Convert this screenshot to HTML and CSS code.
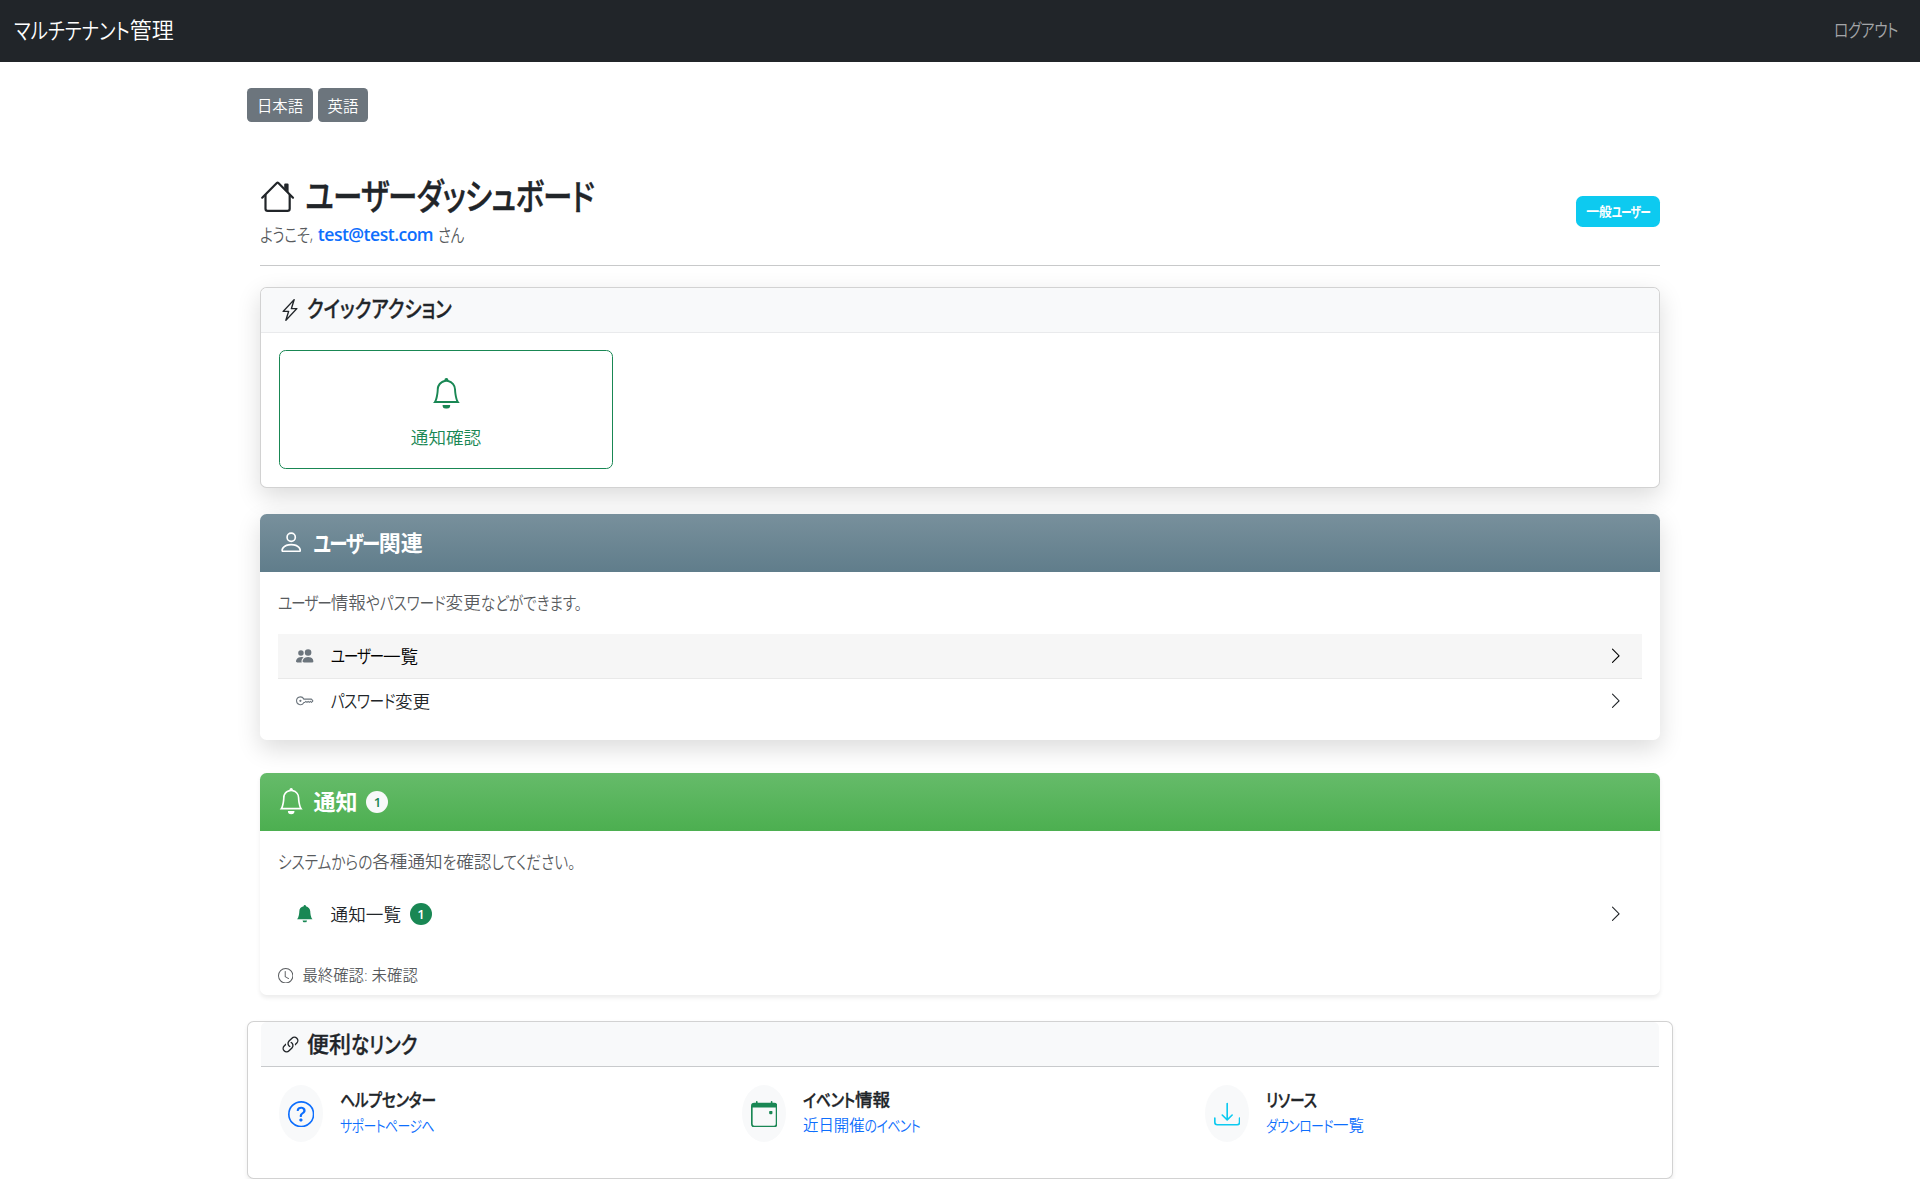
FILE: index.html
```html
<!DOCTYPE html>
<html lang="ja">
<head>
<meta charset="utf-8">
<title>ユーザーダッシュボード</title>
<link rel="stylesheet" href="styles.css">
</head>
<body>
<svg class="sprite" aria-hidden="true">
  <symbol id="house" viewBox="0 0 16 16"><path fill-rule="evenodd" d="M2 13.5V7h1v6.5a.5.5 0 0 0 .5.5h9a.5.5 0 0 0 .5-.5V7h1v6.5a1.5 1.5 0 0 1-1.5 1.5h-9A1.5 1.5 0 0 1 2 13.5zm11-11V6l-2-2V2.500a.5.5 0 0 1 .5-.5h1a.5.5 0 0 1 .5.5z"/><path fill-rule="evenodd" d="M7.293 1.500a1 1 0 0 1 1.414 0l6.647 6.646a.5.5 0 0 1-.708.708L8 2.207 1.354 8.854a.5.5 0 1 1-.708-.708z"/></symbol>
  <symbol id="lightning" viewBox="0 0 16 16"><path d="M11.251.068a.5.5 0 0 1 .227.580L9.677 6.500H13a.5.5 0 0 1 .364.843l-8 8.500a.5.5 0 0 1-.842-.490L6.323 9.500H3a.5.5 0 0 1-.364-.843l8-8.500a.5.5 0 0 1 .615-.090zM4.157 8.500H7a.5.5 0 0 1 .478.647L6.110 13.590l5.732-6.090H9a.5.5 0 0 1-.478-.647L9.890 2.410z"/></symbol>
  <symbol id="bell" viewBox="0 0 16 16"><path d="M8 16a2 2 0 0 0 2-2H6a2 2 0 0 0 2 2M8 1.918l-.797.161A4 4 0 0 0 4 6c0 .628-.134 2.197-.459 3.742-.16.767-.376 1.566-.663 2.258h10.244c-.287-.692-.502-1.490-.663-2.258C12.134 8.197 12 6.628 12 6a4 4 0 0 0-3.203-3.920zM14.220 12c.223.447.481.801.780 1H1c.299-.199.557-.553.780-1C2.680 10.200 3 6.880 3 6c0-2.420 1.720-4.440 4.005-4.901a1 1 0 1 1 1.990 0A5 5 0 0 1 13 6c0 .880.320 4.200 1.220 6"/></symbol>
  <symbol id="bell-fill" viewBox="0 0 16 16"><path d="M8 16a2 2 0 0 0 2-2H6a2 2 0 0 0 2 2m.995-14.901a1 1 0 1 0-1.990 0A5 5 0 0 0 3 6c0 1.098-.500 6-2 7h14c-1.500-1-2-5.902-2-7 0-2.420-1.720-4.440-4.005-4.901"/></symbol>
  <symbol id="person" viewBox="0 0 16 16"><path d="M8 8a3 3 0 1 0 0-6 3 3 0 0 0 0 6m2-3a2 2 0 1 1-4 0 2 2 0 0 1 4 0m4 8c0 1-1 1-1 1H3s-1 0-1-1 1-4 6-4 6 3 6 4m-1-.004c-.001-.246-.154-.986-.832-1.664C11.516 10.680 10.289 10 8 10s-3.516.680-4.168 1.332c-.678.678-.830 1.418-.832 1.664z"/></symbol>
  <symbol id="people" viewBox="0 0 16 16"><path d="M7 14s-1 0-1-1 1-4 5-4 5 3 5 4-1 1-1 1zm4-6a3 3 0 1 0 0-6 3 3 0 0 0 0 6m-5.784 6A2.240 2.240 0 0 1 5 13c0-1.355.680-2.750 1.936-3.720A6.300 6.300 0 0 0 5 9c-4 0-5 3-5 4s1 1 1 1zM4.500 8a2.500 2.500 0 1 0 0-5 2.500 2.500 0 0 0 0 5"/></symbol>
  <symbol id="key" viewBox="0 0 16 16"><path d="M0 8a4 4 0 0 1 7.465-2H14a.5.5 0 0 1 .354.146l1.500 1.500a.5.5 0 0 1 0 .708l-1.500 1.500a.5.5 0 0 1-.708 0L13 9.207l-.646.647a.5.5 0 0 1-.708 0L11 9.207l-.646.647a.5.5 0 0 1-.708 0L9 9.207l-.646.647A.5.5 0 0 1 8 10h-.535A4 4 0 0 1 0 8m4-3a3 3 0 1 0 2.712 4.285A.5.5 0 0 1 7.163 9h.630l.853-.854a.5.5 0 0 1 .708 0l.646.647.646-.647a.5.5 0 0 1 .708 0l.646.647.646-.647a.5.5 0 0 1 .708 0l.646.647.793-.793-1-1h-6.630a.5.5 0 0 1-.451-.285A3 3 0 0 0 4 5"/><circle cx="4" cy="8" r="1"/></symbol>
  <symbol id="chevron" viewBox="0 0 16 16"><path fill-rule="evenodd" d="M4.646 1.646a.5.5 0 0 1 .708 0l6 6a.5.5 0 0 1 0 .708l-6 6a.5.5 0 0 1-.708-.708L10.293 8 4.646 2.354a.5.5 0 0 1 0-.708"/></symbol>
  <symbol id="clock" viewBox="0 0 16 16"><path d="M8 3.500a.5.5 0 0 0-1 0V9a.5.5 0 0 0 .252.434l3.500 2a.5.5 0 0 0 .496-.868L8 8.710z"/><path d="M8 16A8 8 0 1 0 8 0a8 8 0 0 0 0 16m7-8A7 7 0 1 1 1 8a7 7 0 0 1 14 0"/></symbol>
  <symbol id="link" viewBox="0 0 16 16"><path d="M6.354 5.500H4a3 3 0 0 0 0 6h3a3 3 0 0 0 2.830-4H9q-.130 0-.250.031A2 2 0 0 1 7 10.500H4a2 2 0 1 1 0-4h1.535c.218-.376.495-.714.820-1z" transform="rotate(-45 8 8)"/><path d="M9 5.500a3 3 0 0 0-2.830 4h1.098A2 2 0 0 1 9 6.500h3a2 2 0 1 1 0 4h-1.535a4 4 0 0 1-.820 1H12a3 3 0 1 0 0-6z" transform="rotate(-45 8 8)"/></symbol>
  <symbol id="question" viewBox="0 0 16 16"><path d="M8 15A7 7 0 1 1 8 1a7 7 0 0 1 0 14m0 1A8 8 0 1 0 8 0a8 8 0 0 0 0 16"/><path d="M5.255 5.786a.237.237 0 0 0 .241.247h.825c.138 0 .248-.113.266-.250.090-.656.540-1.134 1.342-1.134.686 0 1.314.343 1.314 1.168 0 .635-.374.927-.965 1.371-.673.489-1.206 1.060-1.168 1.987l.003.217a.250.250 0 0 0 .250.246h.811a.250.250 0 0 0 .250-.250v-.105c0-.718.273-.927 1.010-1.486.609-.463 1.244-.977 1.244-2.056 0-1.511-1.276-2.241-2.673-2.241-1.267 0-2.655.590-2.750 2.286m1.557 5.763c0 .533.425.927 1.010.927.609 0 1.028-.394 1.028-.927 0-.552-.420-.940-1.029-.940-.584 0-1.009.388-1.009.940"/></symbol>
  <symbol id="calendar" viewBox="0 0 16 16"><path d="M11 6.500a.5.5 0 0 1 .5-.5h1a.5.5 0 0 1 .5.5v1a.5.5 0 0 1-.5.5h-1a.5.5 0 0 1-.5-.5z"/><path d="M3.500 0a.5.5 0 0 1 .5.5V1h8V.5a.5.5 0 0 1 1 0V1h1a2 2 0 0 1 2 2v11a2 2 0 0 1-2 2H2a2 2 0 0 1-2-2V3a2 2 0 0 1 2-2h1V.5a.5.5 0 0 1 .5-.5M1 4v10a1 1 0 0 0 1 1h12a1 1 0 0 0 1-1V4z"/></symbol>
  <symbol id="download" viewBox="0 0 16 16"><path d="M.5 9.900a.5.5 0 0 1 .5.5v2.500a1 1 0 0 0 1 1h12a1 1 0 0 0 1-1v-2.500a.5.5 0 0 1 1 0v2.500a2 2 0 0 1-2 2H2a2 2 0 0 1-2-2v-2.500a.5.5 0 0 1 .5-.5"/><path d="M7.646 11.854a.5.5 0 0 0 .708 0l3-3a.5.5 0 0 0-.708-.708L8.500 10.293V1.500a.5.5 0 0 0-1 0v8.793L5.354 8.146a.5.5 0 1 0-.708.708z"/></symbol>
</svg>

<nav class="navbar">
  <a class="brand"><span class="kana">マルチテナント</span>管理</a>
  <a class="logout"><span class="kana">ログアウト</span></a>
</nav>

<main class="container">
  <div class="languages">
    <button class="lang">日本語</button>
    <button class="lang">英語</button>
  </div>

  <div class="dashboard">
    <header class="page-head">
      <div>
        <h1 class="title"><svg class="icon"><use href="#house"/></svg><span class="kana">ユーザーダッシュボード</span></h1>
        <p class="welcome"><span class="kana">ようこそ</span>, <strong class="email">test@test.com</strong> <span class="kana">さん</span></p>
      </div>
      <span class="role"><span>一般</span><span class="kana tight">ユーザー</span></span>
    </header>

    <section class="card quick">
      <h2 class="card-head"><svg class="icon"><use href="#lightning"/></svg><span class="kana">クイックアクション</span></h2>
      <div class="quick-body">
        <a class="quick-button"><svg class="icon"><use href="#bell"/></svg><span>通知確認</span></a>
      </div>
    </section>

    <section class="card panel users">
      <h2 class="panel-head slate"><svg class="icon"><use href="#person"/></svg><span><span class="kana tight">ユーザー</span>関連</span></h2>
      <div class="panel-body">
        <p class="description"><span class="kana tight">ユーザー</span>情報<span class="kana">やパスワード</span>変更<span class="kana">などができます。</span></p>
        <a class="row active"><svg class="icon gray"><use href="#people"/></svg><span class="label"><span class="kana tight">ユーザー</span>一覧</span><svg class="icon"><use href="#chevron"/></svg></a>
        <a class="row"><svg class="icon gray"><use href="#key"/></svg><span class="label"><span class="kana">パスワード</span>変更</span><svg class="icon"><use href="#chevron"/></svg></a>
      </div>
    </section>

    <section class="card panel notices">
      <h2 class="panel-head green"><svg class="icon"><use href="#bell"/></svg><span>通知</span><span class="count light">1</span></h2>
      <div class="panel-body">
        <p class="description"><span class="kana">システムからの</span>各種通知<span class="kana">を</span>確認<span class="kana">してください。</span></p>
        <a class="row"><svg class="icon success"><use href="#bell-fill"/></svg><span class="label">通知一覧<span class="count">1</span></span><svg class="icon"><use href="#chevron"/></svg></a>
        <p class="checked"><svg class="icon"><use href="#clock"/></svg><span>最終確認: 未確認</span></p>
      </div>
    </section>
  </div>

  <section class="card links">
    <h2 class="card-head"><svg class="icon"><use href="#link"/></svg><span>便利<span class="kana">なリンク</span></span></h2>
    <div class="link-grid">
      <div class="link-item"><span class="bubble blue"><svg class="icon"><use href="#question"/></svg></span><div><h3><span class="kana">ヘルプセンター</span></h3><a><span class="kana">サポートページへ</span></a></div></div>
      <div class="link-item"><span class="bubble success"><svg class="icon"><use href="#calendar"/></svg></span><div><h3><span class="kana">イベント</span>情報</h3><a>近日開催<span class="kana">のイベント</span></a></div></div>
      <div class="link-item"><span class="bubble cyan"><svg class="icon"><use href="#download"/></svg></span><div><h3><span class="kana">リソース</span></h3><a><span class="kana">ダウンロード</span>一覧</a></div></div>
    </div>
  </section>
</main>
</body>
</html>
```
FILE: styles.css
```css
* { box-sizing: border-box; }
html { font-size: 17.6px; }
body {
  margin: 0;
  background: #fff;
  color: #212529;
  font-family: "Open Sans", "Noto Sans CJK JP", sans-serif;
  line-height: 1.5;
}
h1, h2, h3, p { margin: 0; font-weight: 500; }
p { font-weight: 350; }
a { text-decoration: none; font-weight: 350; }
.sprite { position: absolute; width: 0; height: 0; }
.icon { width: 1em; height: 1em; fill: currentColor; flex: none; display: block; }

/* Condensed kana: a smaller size stretched back to full height */
.kana {
  display: inline-block;
  font-size: .84em;
  line-height: 1;
  font-feature-settings: "palt";
  letter-spacing: -0.03em;
  transform: scaleY(1.22);
}
.kana.tight { letter-spacing: -0.085em; }

.navbar {
  height: 62px;
  padding: 0 22px 3px 14px;
  display: flex;
  align-items: center;
  justify-content: space-between;
  background: #212529;
  color: #fff;
}
.brand { font-size: 22px; line-height: 33px; }
.brand .kana { letter-spacing: 0; }
.logout { color: rgba(255, 255, 255, .6); }

.container { width: 1426px; margin: 0 auto; padding-top: 26px; }
.languages { display: flex; gap: 5px; }
.lang {
  height: 34px;
  width: 66px;
  padding: 0;
  border: 0;
  border-radius: 4.4px;
  background: #6c757d;
  color: #fff;
  font: 350 15.4px/33px "Noto Sans CJK JP", sans-serif;
}
.lang + .lang { width: 50px; }

.dashboard { padding: 0 13px; }
.page-head {
  height: 144px;
  padding: 48px 0 12px;
  border-bottom: 1px solid #c8c9ca;
  display: flex;
  align-items: center;
  justify-content: space-between;
}
.title { margin-top: 3px; display: flex; align-items: center; gap: 10px; font-size: 35.2px; line-height: 42px; }
.title, .card-head, .link-item h3 { -webkit-text-stroke: .3px currentColor; }
.welcome { margin-top: 7px; line-height: 26px; color: rgba(33, 37, 41, .75); }
.email { color: #0d6efd; font-weight: 600; letter-spacing: -0.03em; }
.role {
  width: 84px;
  height: 31px;
  border-radius: 6.6px;
  background: #0dcaf0;
  color: #fff;
  font-size: 12.8px;
  line-height: 31px;
  font-weight: 700;
  text-align: center;
}

.card { border: 1px solid rgba(0, 0, 0, .176); border-radius: 6.6px; background: #fff; }
.card-head {
  height: 45px;
  padding: 0 18px 1px;
  border-bottom: 1px solid #e9eaec;
  border-radius: 5.6px 5.6px 0 0;
  background: #f8f9fa;
  display: flex;
  align-items: center;
  gap: 6px;
  font-size: 22px;
}
.card-head .kana { letter-spacing: 0; }
.quick { height: 201px; margin-top: 21px; box-shadow: 0 8.8px 25px rgba(0, 0, 0, .14); }
.quick .kana { letter-spacing: .005em; }
.quick-body { padding: 17px 18px; }
.quick-button {
  width: 334px;
  height: 119px;
  border: 1px solid #198754;
  border-radius: 6.6px;
  color: #198754;
  display: flex;
  flex-direction: column;
  align-items: center;
  padding-top: 27px;
  gap: 15px;
}
.quick-button .icon { font-size: 30.8px; }

.panel { border: 0; }
.users { height: 226px; margin-top: 26px; box-shadow: 0 8.8px 25px rgba(0, 0, 0, .14); }
.notices { height: 222px; margin-top: 33px; box-shadow: 0 2.2px 4.4px rgba(0, 0, 0, .075); }
.panel-head {
  height: 58px;
  padding: 0 18px 1px;
  border-radius: 6.6px 6.6px 0 0;
  color: #fff;
  display: flex;
  align-items: center;
  gap: 9px;
  font-size: 22px;
  font-weight: 600;
}
.panel-head .icon { font-size: 26.4px; }
.slate { background: linear-gradient(#78909c, #607d8b); }
.green { background: linear-gradient(#66bb6a, #4caf50); }
.panel-body { padding: 17px 18px; }
.description { line-height: 26px; color: rgba(33, 37, 41, .75); margin-bottom: 19px; }
.description .kana { letter-spacing: -0.008em; }
.description .kana.tight { letter-spacing: -0.08em; }
.notices .description { margin-bottom: 18px; }
.row { height: 45px; padding: 0 17px 1px 18px; display: flex; align-items: center; }
.row .label { margin-left: 17px; flex: 1; display: flex; align-items: center; }
.row.active { padding-bottom: 0; background: #f6f6f6; border-bottom: 1px solid #e9e9e9; color: #000; }
.gray { color: #6c757d; }
.success { color: #198754; }
.count {
  width: 22px;
  height: 22px;
  margin-left: 9px;
  border-radius: 50%;
  background: #198754;
  color: #fff;
  font-size: 13.2px;
  line-height: 22px;
  font-weight: 600;
  text-align: center;
}
.count.light { margin-left: 0; background: #f8f9fa; color: #198754; }
.checked { margin-top: 27px; display: flex; align-items: center; gap: 9px; font-size: 15.4px; line-height: 23px; color: rgba(33, 37, 41, .75); }

.links { height: 158px; margin-top: 26px; padding: 0 13px; box-shadow: 0 2.2px 4.4px rgba(0, 0, 0, .075); }
.links .card-head { border-bottom-color: #c8cacc; }
.link-grid { padding: 18px 0 0 18px; display: grid; grid-template-columns: repeat(3, 463px); }
.link-item { display: flex; gap: 17px; }
.link-item h3 { margin-top: 2px; font-size: 17.6px; line-height: 25px; }
.link-item h3 .kana { letter-spacing: -0.01em; }
.link-item a { display: block; font-size: 15.4px; line-height: 27px; color: #0d6efd; }
.link-item a .kana { letter-spacing: -0.045em; }
.bubble {
  width: 44px;
  height: 57px;
  padding-top: 1px;
  border-radius: 50%;
  background: #f8f9fa;
  display: grid;
  place-items: center;
  font-size: 26.4px;
}
.bubble.blue { color: #0d6efd; }
.bubble.cyan { color: #0dcaf0; }
```
